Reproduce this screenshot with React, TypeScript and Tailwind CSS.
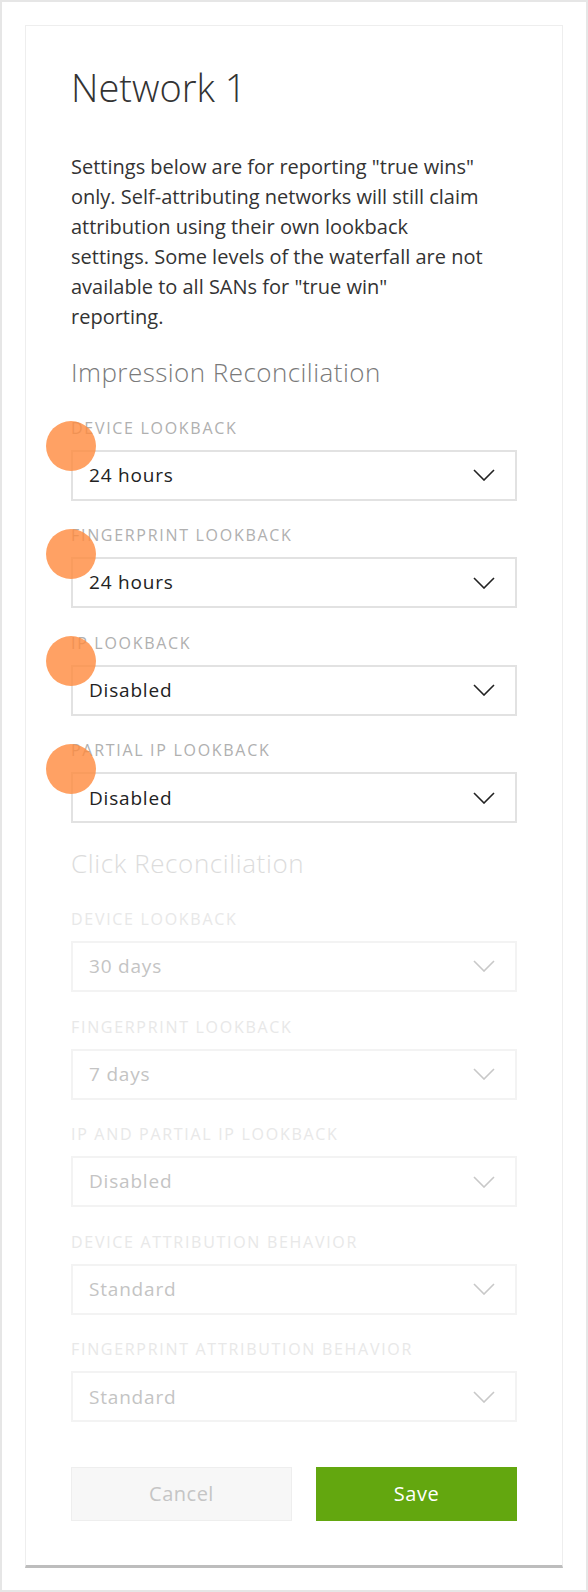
import React from "react";

type Field = { label: string; value: string };

const impression: Field[] = [
  { label: "Device Lookback", value: "24 hours" },
  { label: "Fingerprint Lookback", value: "24 hours" },
  { label: "IP Lookback", value: "Disabled" },
  { label: "Partial IP Lookback", value: "Disabled" },
];

const click: Field[] = [
  { label: "Device Lookback", value: "30 days" },
  { label: "Fingerprint Lookback", value: "7 days" },
  { label: "IP and Partial IP Lookback", value: "Disabled" },
  { label: "Device Attribution Behavior", value: "Standard" },
  { label: "Fingerprint Attribution Behavior", value: "Standard" },
];

const paragraph = [
  'Settings below are for reporting "true wins"',
  "only. Self-attributing networks will still claim",
  "attribution using their own lookback",
  "settings. Some levels of the waterfall are not",
  'available to all SANs for "true win"',
  "reporting.",
];

function Chevron({ color }: { color: string }) {
  return (
    <svg width="22" height="12" viewBox="0 0 22 12" fill="none">
      <path d="M1 1 L11 11 L21 1" stroke={color} strokeWidth="1.6" />
    </svg>
  );
}

function SelectField({ f, disabled, first }: { f: Field; disabled?: boolean; first?: boolean }) {
  return (
    <div className={`relative ${first ? "" : "mt-[24.6px]"}`}>
      <div
        className={`text-[16px] leading-[20px] uppercase tracking-[1.7px] whitespace-nowrap ${
          disabled ? "text-[#e8e8e8]" : "text-[#b0b0b0]"
        }`}
      >
        {f.label}
      </div>
      <div
        className={`mt-[12px] h-[51px] flex items-center justify-between pl-[16px] pr-[20px] border-2 ${
          disabled ? "border-[#f3f3f3]" : "border-[#e2e2e2]"
        }`}
      >
        <span
          className={`text-[19px] tracking-[0.8px] ${disabled ? "text-[#c4c4c4]" : "text-[#222]"}`}
        >
          {f.value}
        </span>
        <Chevron color={disabled ? "#c8c8c8" : "#222"} />
      </div>
      {!disabled && (
        <div className="absolute left-[-25px] top-[3.5px] w-[50px] h-[50px] rounded-full bg-[#ff8a3d]/80" />
      )}
    </div>
  );
}

export default function App() {
  return (
    <div
      className="w-[588px] h-[1592px] border-2 border-[#e6e6e6] bg-white box-border pt-[23px] pl-[23px]"
      style={{ fontFamily: '"Open Sans", "Liberation Sans", sans-serif' }}
    >
      <div className="w-[538px] border border-[#eeeeee] border-b-[3px] border-b-[#bdbdbd] px-[45px] pt-[38px] pb-[44px]">
        <h1 className="text-[38px] leading-[46px] font-light text-[#333]">Network 1</h1>
        <p className="mt-[42px] text-[20px] leading-[30px] text-[#333]">
          {paragraph.map((l, i) => (
            <span key={i} className="block whitespace-nowrap">
              {l}
            </span>
          ))}
        </p>
        <h2 className="mt-[24px] text-[26px] leading-[32px] font-light tracking-[0.45px] text-[#7a7a7a]">
          Impression Reconciliation
        </h2>
        <div className="mt-[29.5px]">
          {impression.map((f, i) => (
            <SelectField key={i} f={f} first={i === 0} />
          ))}
        </div>
        <h2 className="mt-[23.7px] text-[26px] leading-[32px] font-light tracking-[0.6px] text-[#dcdcdc]">
          Click Reconciliation
        </h2>
        <div className="mt-[30px]">
          {click.map((f, i) => (
            <SelectField key={i} f={f} disabled first={i === 0} />
          ))}
        </div>
        <div className="mt-[44.6px] flex gap-[24px]">
          <button className="w-[221px] h-[54px] bg-[#f7f7f7] border border-[#eeeeee] text-[20px] tracking-[0.5px] text-[#c5c5c5]">
            Cancel
          </button>
          <button className="flex-1 h-[54px] bg-[#63a70f] text-[20px] tracking-[0.5px] text-white">
            Save
          </button>
        </div>
      </div>
    </div>
  );
}
